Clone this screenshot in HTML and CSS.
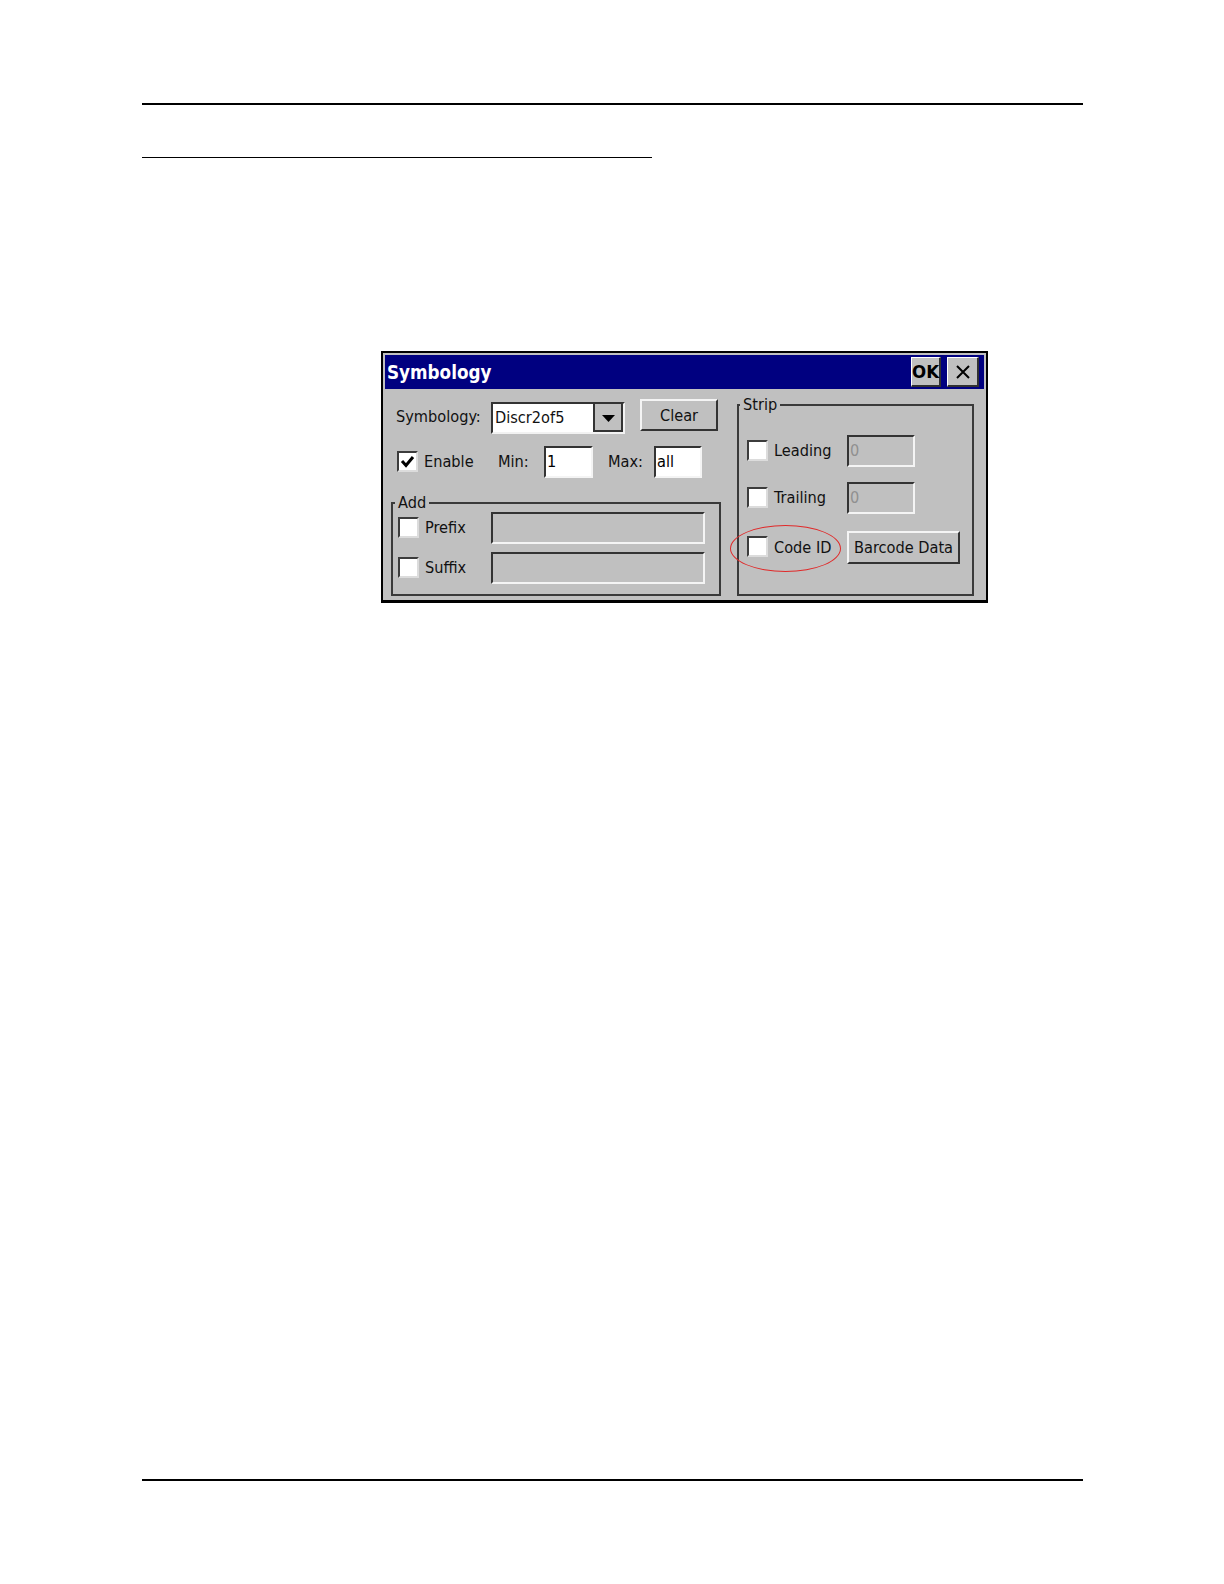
FILE: index.html
```html
<!DOCTYPE html>
<html lang="en">
<head>
<meta charset="utf-8">
<title>Symbology</title>
<link rel="stylesheet" href="styles.css">
</head>
<body>
<div class="page">
  <div class="rule-top"></div>
  <div class="rule-section"></div>
  <div class="figure">
    <div class="dialog">
      <div class="titlebar">
        <span class="title">Symbology</span>
        <div class="title-btns">
          <span class="tbtn ok">OK</span>
          <span class="tbtn close">
            <svg width="14" height="14" viewBox="0 0 14 14"><path d="M1 1 L13 13 M13 1 L1 13" stroke="#000" stroke-width="2" fill="none"/></svg>
          </span>
        </div>
      </div>
      <div class="dlg-body">
        <div class="col-left">
          <div class="row row-sym">
            <span class="lbl lbl-sym">Symbology:</span>
            <div class="combo">
              <span class="combo-text">Discr2of5</span>
              <span class="combo-btn">
                <svg width="13" height="7" viewBox="0 0 13 7"><polygon points="0,0 13,0 6.5,7" fill="#000"/></svg>
              </span>
            </div>
            <span class="btn btn-clear">Clear</span>
          </div>
          <div class="row row-enable">
            <span class="chk">
              <svg width="17" height="17" viewBox="0 0 17 17"><polyline points="3,8 7,12.5 14,4" stroke="#000" stroke-width="3" fill="none"/></svg>
            </span>
            <span class="lbl lbl-enable">Enable</span>
            <span class="lbl lbl-min">Min:</span>
            <span class="edit edit-min">1</span>
            <span class="lbl lbl-max">Max:</span>
            <span class="edit edit-max">all</span>
          </div>
          <fieldset class="group group-add">
            <legend>Add</legend>
            <div class="add-row">
              <span class="opt"><span class="chk"></span><span class="lbl">Prefix</span></span>
              <span class="edit disabled wide"></span>
            </div>
            <div class="add-row second">
              <span class="opt"><span class="chk"></span><span class="lbl">Suffix</span></span>
              <span class="edit disabled wide"></span>
            </div>
          </fieldset>
        </div>
        <fieldset class="group group-strip">
          <legend>Strip</legend>
          <div class="strip-row">
            <span class="opt"><span class="chk"></span><span class="lbl">Leading</span></span>
            <span class="edit disabled small">0</span>
          </div>
          <div class="strip-row trailing">
            <span class="opt"><span class="chk"></span><span class="lbl">Trailing</span></span>
            <span class="edit disabled small">0</span>
          </div>
          <div class="strip-row code">
            <span class="opt"><span class="chk"></span><span class="lbl">Code ID</span></span>
            <span class="btn btn-barcode">Barcode Data</span>
            <span class="highlight"></span>
          </div>
        </fieldset>
      </div>
    </div>
  </div>
  <div class="rule-bottom"></div>
</div>
</body>
</html>
```

FILE: styles.css
```css
* {
  box-sizing: border-box;
}

html,
body {
  height: 100%;
  overflow: hidden;
}

body {
  margin: 0;
  background: #ffffff;
  font-family: "DejaVu Sans Condensed", "DejaVu Sans", sans-serif;
  color: #111111;
}

.page {
  height: 100%;
  display: flex;
  flex-direction: column;
  padding: 103px 141px 103px 142px;
}

.rule-top {
  height: 2px;
  background: #000000;
}

.rule-section {
  width: 510px;
  height: 1px;
  margin-top: 52px;
  background: #000000;
}

.figure {
  margin-top: 193px;
  margin-left: 239px;
}

.rule-bottom {
  margin-top: auto;
  height: 2px;
  background: #000000;
}

/* dialog */
.dialog {
  width: 607px;
  border: 2px solid #000000;
  border-bottom-width: 3px;
  padding: 2px;
  background: #c0c0c0;
}

.titlebar {
  height: 34px;
  background: #000080;
  display: flex;
  align-items: center;
  justify-content: space-between;
  padding: 0 5px 0 2px;
}

.title {
  color: #ffffff;
  font-weight: bold;
  font-size: 18.7px;
}

.title-btns {
  display: flex;
  gap: 6px;
}

.tbtn {
  height: 30px;
  display: flex;
  align-items: center;
  justify-content: center;
  background: #c0c0c0;
  border-top: 1px solid #ffffff;
  border-left: 1px solid #ffffff;
  border-right: 2px solid #303030;
  border-bottom: 2px solid #303030;
  color: #000000;
}

.ok {
  width: 30px;
  font-weight: bold;
  font-size: 18.5px;
}

.close {
  width: 32px;
}

.dlg-body {
  height: 209px;
  display: flex;
  align-items: flex-start;
  gap: 16px;
  padding: 7px 10px 2px 6px;
  font-size: 16.2px;
}

.col-left {
  width: 330px;
  padding-top: 3px;
}

.row {
  display: flex;
  align-items: center;
}

.row-sym {
  height: 35px;
  align-items: flex-start;
  padding-left: 5px;
}

.lbl {
  white-space: nowrap;
  line-height: 18px;
}

.lbl-sym {
  width: 95px;
  align-self: center;
}

.combo {
  width: 134px;
  height: 32px;
  margin-top: 3px;
  display: flex;
  background: #ffffff;
  border-top: 2px solid #333333;
  border-left: 2px solid #333333;
  border-right: 2px solid #f2f2f2;
  border-bottom: 2px solid #f2f2f2;
}

.combo-text {
  flex: 1;
  padding-left: 2px;
  line-height: 27px;
}

.combo-btn {
  width: 30px;
  display: flex;
  align-items: center;
  justify-content: center;
  background: #c0c0c0;
  border-left: 2px solid #333333;
  border-right: 2px solid #333333;
  border-bottom: 2px solid #333333;
  padding-top: 2px;
}

.btn {
  display: flex;
  align-items: center;
  justify-content: center;
  background: #c0c0c0;
  border-top: 2px solid #f4f4f4;
  border-left: 2px solid #f4f4f4;
  border-right: 2px solid #333333;
  border-bottom: 2px solid #333333;
  white-space: nowrap;
}

.btn-clear {
  width: 78px;
  height: 32px;
  margin-left: 15px;
}

.row-enable {
  height: 32px;
  margin-top: 12px;
  padding-left: 6px;
}

.chk {
  width: 21px;
  height: 21px;
  flex: none;
  display: flex;
  align-items: center;
  justify-content: center;
  background: #ffffff;
  border-top: 2px solid #3c3c3c;
  border-left: 2px solid #3c3c3c;
  border-right: 2px solid #dcdcdc;
  border-bottom: 2px solid #dcdcdc;
  margin-right: 6px;
}

.row-enable .chk,
.opt .chk {
  margin-top: -2px;
}

.lbl-enable {
  width: 74px;
}

.lbl-min,
.lbl-max {
  width: 46px;
}

.lbl-max {
  margin-left: 15px;
}

.edit {
  height: 32px;
  display: block;
  background: #ffffff;
  border-top: 2px solid #333333;
  border-left: 2px solid #333333;
  border-right: 2px solid #f4f4f4;
  border-bottom: 2px solid #f4f4f4;
  padding-left: 1px;
  line-height: 27px;
  color: #000000;
}

.edit-min {
  width: 49px;
}

.edit-max {
  width: 48px;
}

.edit.disabled {
  background: #c0c0c0;
  color: #909090;
}

/* group boxes */
.group {
  margin: 0;
  min-width: 0;
  border: 2px solid #3a3a3a;
}

.group legend {
  padding: 0 3px;
  line-height: 18px;
}

.group-add {
  width: 330px;
  margin-top: 16px;
  padding: 0 14px 10px 0;
}

.group-add legend {
  margin-left: 2px;
}

.add-row {
  height: 32px;
  display: flex;
  align-items: center;
  padding-left: 5px;
}

.add-row.second {
  margin-top: 8px;
}

.opt {
  display: flex;
  align-items: center;
}

.add-row .opt {
  width: 93px;
}

.edit.wide {
  flex: 1;
}

.group-strip {
  width: 237px;
  padding: 21px 0 30px 0;
}

.group-strip legend {
  margin-left: 1px;
}

.strip-row {
  position: relative;
  height: 32px;
  display: flex;
  align-items: center;
  padding-left: 8px;
}

.strip-row .opt {
  width: 100px;
}

.strip-row.trailing {
  margin-top: 15px;
}

.strip-row.code {
  height: 33px;
  margin-top: 17px;
}

.edit.small {
  width: 68px;
}

.btn-barcode {
  width: 113px;
  height: 33px;
}

.highlight {
  position: absolute;
  left: -9px;
  top: -6px;
  width: 111px;
  height: 47px;
  border: 1.5px solid #e02a2a;
  border-radius: 50%;
  pointer-events: none;
}
```
